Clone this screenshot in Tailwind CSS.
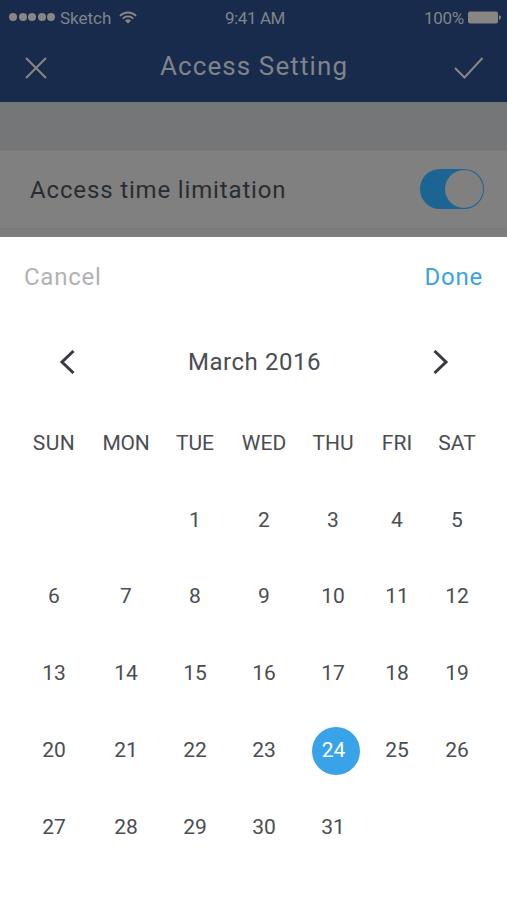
<!DOCTYPE html>
<html lang="en">
<head>
    <meta charset="UTF-8">
    <meta name="viewport" content="width=device-width, initial-scale=1.0">
    <title>Access Setting</title>
    <script src="https://cdn.jsdelivr.net/npm/@tailwindcss/browser@4"></script>
</head>
<body class="w-[507px] h-[900px] overflow-hidden bg-white font-[Roboto,sans-serif] text-[#4a4d52]">
    <!-- Dimmed page behind the sheet -->
    <header class="h-[102px] bg-[#182b4c] text-[#808488]">
        <!-- Status bar -->
        <div class="grid grid-cols-3 items-center h-9 pl-[9px] pr-[6px] text-[17px] leading-9">
            <div class="flex items-center">
                <div class="flex gap-[1.5px] mr-[5px] -mt-0.5">
                    <span class="size-2 rounded-full bg-[#888683]"></span>
                    <span class="size-2 rounded-full bg-[#888683]"></span>
                    <span class="size-2 rounded-full bg-[#888683]"></span>
                    <span class="size-2 rounded-full bg-[#888683]"></span>
                    <span class="size-2 rounded-full bg-[#888683]"></span>
                </div>
                <span>Sketch</span>
                <svg class="w-[18px] h-[13px] ml-2 -mt-0.5" viewBox="0 0 18 13" fill="none" stroke="#888683" stroke-width="1.9">
                    <path d="M1 4.8a11.3 11.3 0 0 1 16 0M3.8 7.6a7.3 7.3 0 0 1 10.4 0"/>
                    <path d="M9 12.6 6 9.7a4.3 4.3 0 0 1 6 0z" fill="#888683" stroke="none"/>
                </svg>
            </div>
            <div class="text-center tracking-[-0.4px]">9:41 AM</div>
            <div class="flex items-center justify-end">
                <span class="tracking-[-0.3px]">100%</span>
                <svg class="w-[33px] h-[13px] ml-1 -mt-0.5" viewBox="0 0 33 13" fill="#888683">
                    <rect x="0" y="0.5" width="30" height="12" rx="2"/>
                    <path d="M31 4.2q2 .5 2 2.3t-2 2.3z"/>
                </svg>
            </div>
        </div>
        <!-- Title bar -->
        <div class="flex items-center justify-between h-[62px] px-[25px]">
            <svg class="size-[22px] mt-0.5" viewBox="0 0 22 22" fill="none" stroke="#888683" stroke-width="2">
                <path d="M1 1l20 20M21 1L1 21"/>
            </svg>
            <h1 class="ml-[7px] -mt-0.5 text-[26px] tracking-[1.1px]">Access Setting</h1>
            <svg class="w-[29px] h-[22px] mt-0.5 -mr-px" viewBox="0 0 29 22" fill="none" stroke="#888683" stroke-width="2">
                <path d="M1 11l9.5 9.5L28.5 1"/>
            </svg>
        </div>
    </header>

    <div class="h-12 bg-[#747678]"></div>
    <div class="flex items-center justify-between h-[79px] pl-[30px] pr-[23px] border-y border-[#77797a] bg-[#808080]">
        <span class="text-2xl tracking-[0.85px] text-[#292d31]">Access time limitation</span>
        <div class="flex justify-end w-16 h-10 -mt-px p-px rounded-full bg-[#1b6494]">
            <span class="size-[38px] rounded-full bg-[#808080]"></span>
        </div>
    </div>
    <div class="h-2 bg-[#7d7d7d]"></div>

    <!-- Date picker sheet -->
    <section class="h-[663px] bg-white">
        <div class="flex items-center justify-between h-20 px-6 text-2xl tracking-[0.75px]">
            <button class="text-[#b0b2b6]">Cancel</button>
            <button class="text-[#3aa2e6]">Done</button>
        </div>

        <div class="flex items-center justify-between h-[90px] px-[59px]">
            <svg class="w-4 h-6" viewBox="0 0 16 24" fill="none" stroke="#383a44" stroke-width="3">
                <path d="M14.5 1L3 12l11.5 11"/>
            </svg>
            <span class="ml-px text-2xl tracking-[0.55px]">March 2016</span>
            <svg class="w-4 h-6 -mr-px" viewBox="0 0 16 24" fill="none" stroke="#383a44" stroke-width="3">
                <path d="M1.5 1L13 12 1.5 23"/>
            </svg>
        </div>

        <div class="grid grid-cols-[72px_72px_66px_72px_66px_62px_58px] auto-rows-[76.9px] items-center pl-[18px] -mt-[2px] text-center text-[21px]">
            <span class="tracking-[0.5px]">SUN</span>
            <span class="tracking-[-0.2px]">MON</span>
            <span>TUE</span>
            <span>WED</span>
            <span>THU</span>
            <span>FRI</span>
            <span>SAT</span>

            <span class="col-start-3">1</span>
            <span>2</span>
            <span>3</span>
            <span>4</span>
            <span>5</span>

            <span>6</span>
            <span>7</span>
            <span>8</span>
            <span>9</span>
            <span>10</span>
            <span>11</span>
            <span>12</span>

            <span>13</span>
            <span>14</span>
            <span>15</span>
            <span>16</span>
            <span>17</span>
            <span>18</span>
            <span>19</span>

            <span>20</span>
            <span>21</span>
            <span>22</span>
            <span>23</span>
            <span class="flex items-center justify-center size-12 ml-3 pr-[5px] rounded-full bg-[#38a3e8] text-white">24</span>
            <span>25</span>
            <span>26</span>

            <span>27</span>
            <span>28</span>
            <span>29</span>
            <span>30</span>
            <span>31</span>
        </div>
    </section>
</body>
</html>
